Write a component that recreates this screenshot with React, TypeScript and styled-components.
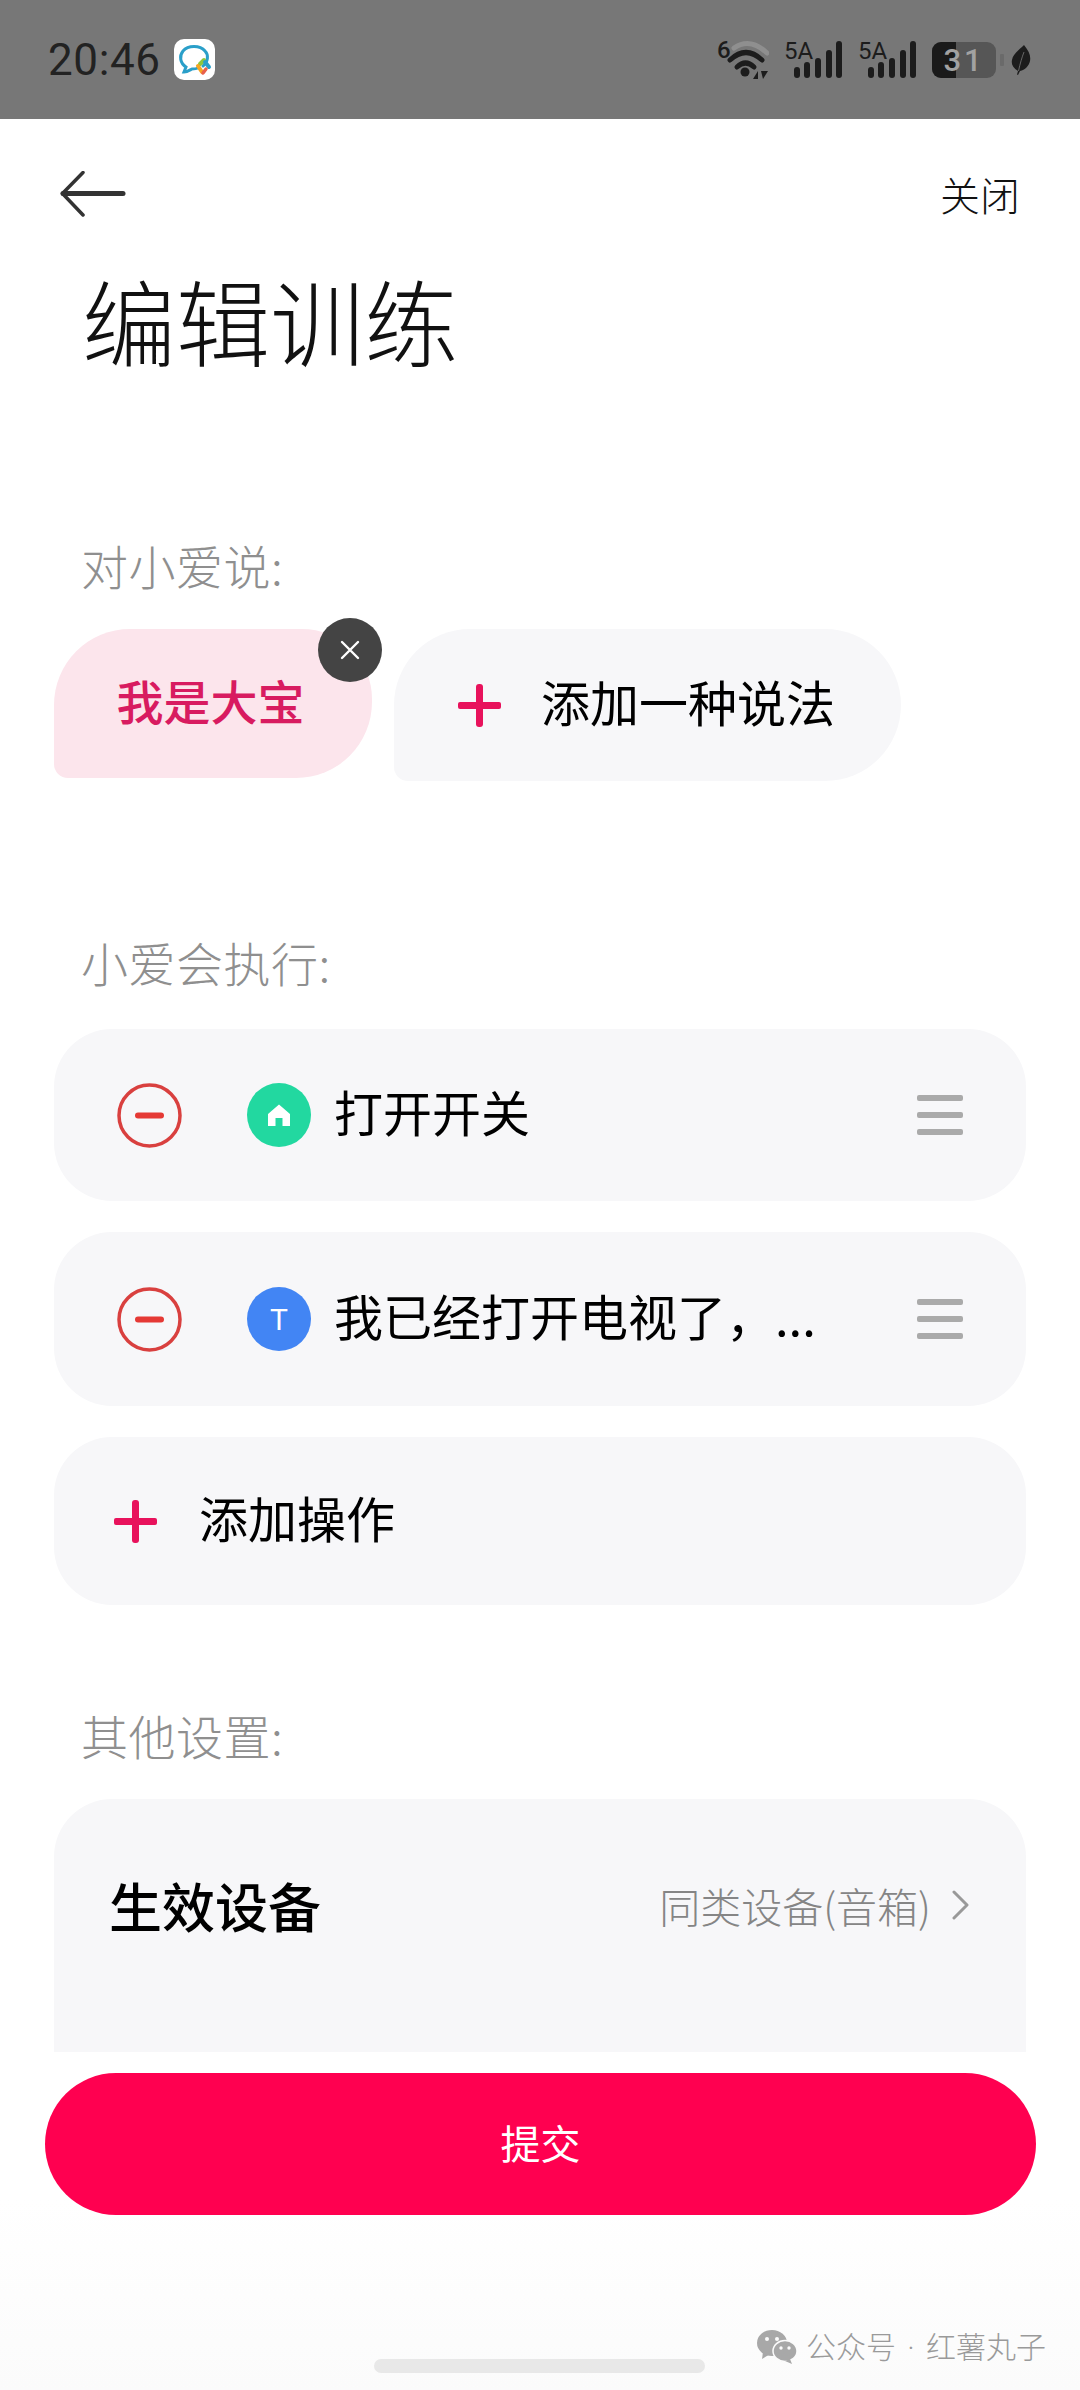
import React from "react";
import styled, { createGlobalStyle } from "styled-components";

const GlobalStyle = createGlobalStyle`
  html, body {
    margin: 0;
    padding: 0;
    background: #fff;
  }
  * {
    box-sizing: border-box;
  }
  body {
    font-family: "Noto Sans CJK SC", "Noto Sans", sans-serif;
  }
`;

const Page = styled.div`
  position: relative;
  width: 1080px;
  height: 2390px;
  overflow: hidden;
  background: linear-gradient(#fff 2200px, #fbfbfb 2390px);
  display: flex;
  flex-direction: column;
`;

const StatusBar = styled.div`
  height: 119px;
  background: #777777;
  padding: 0 49px 0 48px;
  display: flex;
  align-items: center;
  justify-content: space-between;
  flex-shrink: 0;
`;

const StatusLeft = styled.div`
  display: flex;
  align-items: center;
  gap: 13px;
`;

const Clock = styled.span`
  font-family: Roboto, sans-serif;
  font-size: 44px;
  line-height: 50px;
  color: #222;
  letter-spacing: 0.6px;
`;

const AppBadge = styled.div`
  width: 41px;
  height: 41px;
  border-radius: 10px;
  background: #fff;
  display: flex;
  align-items: center;
  justify-content: center;
`;

const StatusRight = styled.div`
  display: flex;
  align-items: center;
  gap: 15px;
`;

// taller than the drawing so the digits above the bars have room
const NetworkSvg = styled.svg`
  margin-top: -6px;
`;

const LeafSvg = styled.svg`
  margin-left: -8px;
`;

const NavBar = styled.div`
  height: 98px;
  margin-top: 52px;
  padding: 0 60px;
  display: flex;
  align-items: flex-start;
  justify-content: space-between;
  flex-shrink: 0;
`;

const CloseLink = styled.span`
  font-size: 40px;
  line-height: 46px;
  color: #111;
  font-weight: 300;
`;

const Title = styled.h1`
  margin: 0 0 0 82px;
  font-size: 94px;
  line-height: 100px;
  font-weight: 200;
  color: #111;
  height: 100px;
  flex-shrink: 0;
`;

const SectionLabel = styled.div<{ $top: number }>`
  margin: ${(p) => p.$top}px 0 0 81px;
  font-size: 47px;
  line-height: 50px;
  font-weight: 300;
  letter-spacing: 0.5px;
  color: #8f8f8f;
  flex-shrink: 0;
`;

const ChipRow = styled.div`
  margin: 39px 0 0 54px;
  display: flex;
  gap: 22px;
  align-items: flex-start;
  flex-shrink: 0;
`;

const PhraseChip = styled.div`
  position: relative;
  width: 318px;
  height: 149px;
  background: #fce5ec;
  border-radius: 76px 70px 76px 14px;
  display: flex;
  align-items: center;
  justify-content: center;
  padding: 0 5px 9px 0;
  font-size: 47px;
  font-weight: 500;
  color: #d81b60;
`;

const RemoveBadge = styled.div`
  position: absolute;
  top: -11px;
  right: -10px;
  width: 64px;
  height: 64px;
  border-radius: 50%;
  background: #444;
  display: flex;
  align-items: center;
  justify-content: center;
`;

const AddChip = styled.div`
  width: 507px;
  height: 152px;
  background: #f7f7f9;
  border-radius: 76px 76px 76px 14px;
  display: flex;
  align-items: center;
  padding-left: 64px;
  gap: 40px;
  font-size: 49px;
  color: #000;
`;

const RowList = styled.div`
  margin: 42px 54px 0;
  display: flex;
  flex-direction: column;
  gap: 31px;
  flex-shrink: 0;
`;

const ActionRow = styled.div<{ $height: number }>`
  height: ${(p) => p.$height}px;
  background: #f7f7f9;
  border-radius: 58px;
  display: flex;
  align-items: center;
  padding: 0 63px;
  font-size: 49px;
  color: #000;
`;

const AddRow = styled(ActionRow)`
  padding-left: 60px;
  gap: 42px;
`;

const IconDot = styled.div<{ $color: string }>`
  width: 64px;
  height: 64px;
  border-radius: 50%;
  background: ${(p) => p.$color};
  margin-left: 65px;
  margin-right: 23px;
  display: flex;
  align-items: center;
  justify-content: center;
  flex-shrink: 0;
  color: #fff;
  font-family: Roboto, sans-serif;
  font-size: 30px;
`;

const RowText = styled.span`
  flex: 1;
  white-space: nowrap;
  padding-bottom: 9px;
`;

const Handle = styled.div`
  width: 46px;
  height: 40px;
  display: flex;
  flex-direction: column;
  justify-content: space-between;
  flex-shrink: 0;
`;

const HandleBar = styled.div`
  height: 6px;
  border-radius: 2px;
  background: #aaaaaa;
`;

const SettingsCard = styled.div`
  margin: 39px 54px 0;
  height: 253px;
  flex-shrink: 0;
  background: #f7f7f9;
  border-radius: 58px 58px 0 0;
  padding: 64px 57px 0 55px;
  display: flex;
  align-items: flex-start;
  justify-content: space-between;
`;

const SettingName = styled.span`
  font-size: 53px;
  line-height: 84px;
  font-weight: 500;
  color: #000;
`;

const SettingValue = styled.span`
  display: flex;
  align-items: center;
  gap: 21px;
  height: 84px;
  font-size: 41px;
  font-weight: 300;
  color: #858585;
`;

const SubmitButton = styled.div`
  margin: 21px 44px 0 45px;
  height: 142px;
  flex-shrink: 0;
  border-radius: 71px;
  background: #ff0050;
  color: #fff;
  font-size: 40px;
  padding-bottom: 4px;
  display: flex;
  align-items: center;
  justify-content: center;
`;

const Watermark = styled.div`
  position: absolute;
  left: 757px;
  top: 2325px;
  display: flex;
  align-items: center;
  gap: 9px;
  font-size: 30px;
  line-height: 40px;
  font-weight: 300;
  color: #9a9a9a;
  white-space: nowrap;
`;

const WatermarkDot = styled.span`
  display: inline-block;
  width: 30px;
  text-align: center;
  font-family: Roboto, sans-serif;
`;

const HomeIndicator = styled.div`
  position: absolute;
  left: 374px;
  top: 2359px;
  width: 331px;
  height: 14px;
  border-radius: 7px;
  background: #e8e8e8;
`;

const statusInk = "#1c1c1c";

const WifiIcon = () => (
  <NetworkSvg width="52" height="45" viewBox="0 -6 52 45" fill="none">
    <text x="0" y="18" fontFamily="Roboto, sans-serif" fontSize="24" fontWeight="500" fill={statusInk}>6</text>
    <path d="M17 8 Q33 -3 50 13" stroke="#8f8f8f" strokeWidth="5" strokeLinecap="round" />
    <path d="M13 20 Q29 5 45 20" stroke={statusInk} strokeWidth="5" strokeLinecap="round" />
    <path d="M20 27 Q28.5 19 37 27" stroke={statusInk} strokeWidth="5" strokeLinecap="round" />
    <circle cx="28" cy="32" r="4.5" fill={statusInk} />
    <path d="M36 39 L41 31 L41 39 Z M44 31 L51 31 L46 39 Z" fill={statusInk} />
  </NetworkSvg>
);

const SignalIcon = () => (
  <NetworkSvg width="59" height="43" viewBox="0 -6 59 43">
    <text x="0" y="18" fontFamily="Roboto, sans-serif" fontSize="24" fill={statusInk}>5A</text>
    <rect x="10" y="26" width="6" height="11" rx="3" fill={statusInk} />
    <rect x="20" y="21" width="6" height="16" rx="3" fill={statusInk} />
    <rect x="31" y="17" width="6" height="20" rx="3" fill={statusInk} />
    <rect x="42" y="9" width="6" height="28" rx="3" fill={statusInk} />
    <rect x="52" y="0" width="6" height="37" rx="3" fill={statusInk} />
  </NetworkSvg>
);

const BatteryIcon = () => (
  <svg width="72" height="36" viewBox="0 0 72 36">
    <rect x="0" y="0" width="64" height="36" rx="9" fill="#565656" />
    <path d="M9 0 H24 V36 H9 A9 9 0 0 1 0 27 V9 A9 9 0 0 1 9 0 Z" fill="#1a1a1a" />
    <text x="32" y="29" textAnchor="middle" fontFamily="Roboto, sans-serif" fontSize="31" fontWeight="500" fill="#a2a2a2" letterSpacing="3">31</text>
    <rect x="68" y="12" width="4" height="12" rx="1" fill="#6a6a6a" />
  </svg>
);

const LeafIcon = () => (
  <LeafSvg width="20" height="30" viewBox="0 0 20 30">
    <path d="M13 0 C18 6 20 11 19 16 C18 21 14 25 9 26 L7 30 L6 29.5 L7 26 C2 23 0 19 1 15 C2 9 8 5 13 0 Z" fill={statusInk} />
    <path d="M7.5 26 C9 19 11 12 13 7" stroke="#666" strokeWidth="1" fill="none" />
  </LeafSvg>
);

const MessengerIcon = () => (
  <svg width="36" height="36" viewBox="0 0 36 36" fill="none">
    <path d="M27 24 C32 20 33 13 29 9 C24 3 12 3 7 9 C3 14 4 21 10 25 L8 30 C11 30 14 28 16 27 C18 27 20 27 22 26" stroke="#2a9fc9" strokeWidth="3" strokeLinecap="round" />
    <path d="M24 22 L28 18" stroke="#8cc63f" strokeWidth="4" strokeLinecap="round" />
    <path d="M29 20 L33 25" stroke="#2a9fc9" strokeWidth="4" strokeLinecap="round" />
    <path d="M22 24 L26 30" stroke="#f5a623" strokeWidth="4" strokeLinecap="round" />
    <path d="M30 27 L27 31" stroke="#e8604c" strokeWidth="3.5" strokeLinecap="round" />
  </svg>
);

const BackArrow = () => (
  <svg width="66" height="46" viewBox="0 0 66 46" fill="none">
    <path d="M23 1.5 L2.5 22.5 L23 44" stroke="#333" strokeWidth="3.5" strokeLinecap="round" strokeLinejoin="round" />
    <path d="M3 22.5 H63" stroke="#333" strokeWidth="5" strokeLinecap="round" />
  </svg>
);

const PlusIcon = () => (
  <svg width="43" height="43" viewBox="0 0 43 43" style={{ flexShrink: 0 }}>
    <rect x="0" y="18" width="43" height="7" rx="2" fill="#e8125c" />
    <rect x="18" y="0" width="7" height="43" rx="3" fill="#e8125c" />
  </svg>
);

const MinusCircle = () => (
  <svg width="65" height="65" viewBox="0 0 65 65" fill="none" style={{ flexShrink: 0 }}>
    <circle cx="32.5" cy="32.5" r="30.5" stroke="#d9403f" strokeWidth="3.5" />
    <rect x="18" y="29.5" width="29" height="6" rx="3" fill="#e53935" />
  </svg>
);

const HomeGlyph = () => (
  <svg width="24" height="24" viewBox="0 0 24 24">
    <path d="M12 1.5 L23 11 V23 H15.5 V15 H8.5 V23 H1 V11 Z" fill="#fff" />
  </svg>
);

const CloseGlyph = () => (
  <svg width="20" height="20" viewBox="0 0 20 20">
    <path d="M2 2 L18 18 M18 2 L2 18" stroke="#fff" strokeWidth="2.4" strokeLinecap="round" />
  </svg>
);

const Chevron = () => (
  <svg width="17" height="30" viewBox="0 0 17 30" fill="none">
    <path d="M2 2 L15 15 L2 28" stroke="#999" strokeWidth="3" strokeLinecap="round" strokeLinejoin="round" />
  </svg>
);

const WeChatIcon = () => (
  <svg width="40" height="34" viewBox="0 0 40 34">
    <ellipse cx="15" cy="13" rx="15" ry="13" fill="#a8a8a8" />
    <path d="M6 22 L5 29 L13 24 Z" fill="#a8a8a8" />
    <ellipse cx="28" cy="21" rx="12" ry="10.5" fill="#a8a8a8" stroke="#fbfbfb" strokeWidth="1.5" />
    <path d="M33 29 L35 34 L28 31 Z" fill="#a8a8a8" />
    <circle cx="10" cy="9" r="2" fill="#fbfbfb" />
    <circle cx="20" cy="9" r="2" fill="#fbfbfb" />
    <circle cx="24" cy="18" r="1.7" fill="#fbfbfb" />
    <circle cx="32" cy="18" r="1.7" fill="#fbfbfb" />
  </svg>
);

function ActionItem(props: { height: number; color: string; icon: React.ReactNode; text: string }) {
  return (
    <ActionRow $height={props.height}>
      <MinusCircle />
      <IconDot $color={props.color}>{props.icon}</IconDot>
      <RowText>{props.text}</RowText>
      <Handle>
        <HandleBar />
        <HandleBar />
        <HandleBar />
      </Handle>
    </ActionRow>
  );
}

export default function App() {
  return (
    <Page>
      <GlobalStyle />
      <StatusBar>
        <StatusLeft>
          <Clock>20:46</Clock>
          <AppBadge>
            <MessengerIcon />
          </AppBadge>
        </StatusLeft>
        <StatusRight>
          <WifiIcon />
          <SignalIcon />
          <SignalIcon />
          <BatteryIcon />
          <LeafIcon />
        </StatusRight>
      </StatusBar>

      <NavBar>
        <BackArrow />
        <CloseLink>关闭</CloseLink>
      </NavBar>
      <Title>编辑训练</Title>

      <SectionLabel $top={171}>对小爱说:</SectionLabel>
      <ChipRow>
        <PhraseChip>
          我是大宝
          <RemoveBadge>
            <CloseGlyph />
          </RemoveBadge>
        </PhraseChip>
        <AddChip>
          <PlusIcon />
          <RowText>添加一种说法</RowText>
        </AddChip>
      </ChipRow>

      <SectionLabel $top={156}>小爱会执行:</SectionLabel>
      <RowList>
        <ActionItem height={172} color="#22d8a0" icon={<HomeGlyph />} text="打开开关" />
        <ActionItem height={174} color="#4285f4" icon="T" text="我已经打开电视了，..." />
        <AddRow $height={168}>
          <PlusIcon />
          <RowText>添加操作</RowText>
        </AddRow>
      </RowList>

      <SectionLabel $top={105}>其他设置:</SectionLabel>
      <SettingsCard>
        <SettingName>生效设备</SettingName>
        <SettingValue>
          同类设备(音箱)
          <Chevron />
        </SettingValue>
      </SettingsCard>

      <SubmitButton>提交</SubmitButton>

      <Watermark>
        <WeChatIcon />
        <span>
          公众号<WatermarkDot>·</WatermarkDot>红薯丸子
        </span>
      </Watermark>
      <HomeIndicator />
    </Page>
  );
}
